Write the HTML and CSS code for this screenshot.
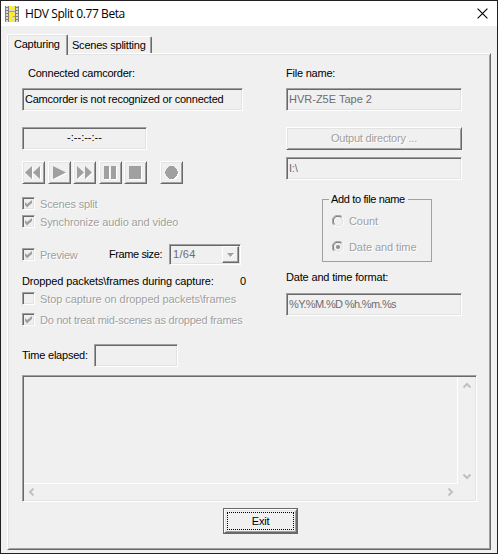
FILE: index.html
```html
<!DOCTYPE html>
<html lang="en">
<head>
<meta charset="utf-8">
<title>HDV Split 0.77 Beta</title>
<link rel="stylesheet" href="styles.css">
</head>
<body>
<div class="window">
  <header class="titlebar">
    <svg class="app-icon" width="16" height="16" viewBox="0 0 16 16" shape-rendering="crispEdges">
      <path fill="#d8d8d8" d="M0 0h14v16H0z"/>
      <path fill="#808080" d="M0 0h1v16H0zM3 0h1v16H3zM10 0h1v16h-1zM13 0h1v16h-1z"/>
      <path fill="#808080" d="M1 1h2v1H1zM1 4h2v1H1zM1 7h2v1H1zM1 10h2v1H1zM1 13h2v1H1zM11 1h2v1h-2zM11 4h2v1h-2zM11 7h2v1h-2zM11 10h2v1h-2zM11 13h2v1h-2z"/>
      <path fill="#a0a0a0" d="M4 5h6v1H4zM4 10h6v1H4z"/>
      <path fill="#ffee20" d="M4 0h2v1h2V0h2v4H8V3H6v1H4zM4 6h4v1h2v3H8v1H4zM4 12h2v2h2v-2h2v2H9v2H5v-2H4z"/>
      <path fill="#d0d0d0" d="M6 7h1v2H6z"/>
    </svg>
    <h1 class="title">HDV Split 0.77 Beta</h1>
    <svg class="close" width="11" height="11" viewBox="0 0 11 11"><path d="M.6.6l9.8 9.8M10.4.6L.6 10.4" stroke="#000" stroke-width="1.1"/></svg>
  </header>
  <nav class="tabs">
    <div class="tab active">Capturing</div>
    <div class="tab second">Scenes splitting</div>
  </nav>
  <main class="panel">
    <div class="columns">
      <section class="left">
        <div class="label camcorder-label">Connected camcorder:</div>
        <div class="field camcorder">Camcorder is not recognized or connected</div>
        <div class="field timecode">-:--:--:--</div>
        <div class="transport">
          <button class="btn"><svg class="glyph" width="17" height="17" viewBox="0 0 17 17"><path d="M7 2v13L0 8.500zM15 2v13L8 8.500z"/></svg></button>
          <button class="btn"><svg class="glyph" width="17" height="17" viewBox="0 0 17 17"><path d="M2 2l13 6.500L2 15z"/></svg></button>
          <button class="btn"><svg class="glyph" width="17" height="17" viewBox="0 0 17 17"><path d="M1 2l7 6.500L1 15zM9 2l7 6.500L9 15z"/></svg></button>
          <button class="btn"><svg class="glyph" width="17" height="17" viewBox="0 0 17 17"><path d="M2 2h5v13H2zM9 2h5v13H9z"/></svg></button>
          <button class="btn"><svg class="glyph" width="17" height="17" viewBox="0 0 17 17"><path d="M2 2h12v13H2z"/></svg></button>
          <button class="btn record"><svg class="glyph" width="17" height="17" viewBox="0 0 17 17"><path d="M6 2h5v1h1v1h1v1h1v2h1v3h-1v2h-1v1h-1v1h-1v1H6v-1H5v-1H4v-1H3v-2H2V7h1V5h1V4h1V3h1z"/></svg></button>
        </div>
        <div class="check scenes"><span class="box"><svg width="9" height="9" viewBox="0 0 9 9"><path d="M1 3l2 2 5-4v3L3 8.500 1 6z"/></svg></span><span class="off">Scenes split</span></div>
        <div class="check sync"><span class="box"><svg width="9" height="9" viewBox="0 0 9 9"><path d="M1 3l2 2 5-4v3L3 8.500 1 6z"/></svg></span><span class="off">Synchronize audio and video</span></div>
        <div class="preview-row">
          <div class="check preview"><span class="box"><svg width="9" height="9" viewBox="0 0 9 9"><path d="M1 3l2 2 5-4v3L3 8.500 1 6z"/></svg></span><span class="off">Preview</span></div>
          <span class="label frame-label">Frame size:</span>
          <div class="field select"><span>1/64</span><span class="drop"><svg width="9" height="6" viewBox="0 0 9 6"><path d="M2 2h7L5.500 6z" fill="#fff"/><path d="M1 1h7L4.500 5z" fill="#a0a0a0"/></svg></span></div>
        </div>
        <div class="dropped label"><span>Dropped packets\frames during capture:</span><span class="count">0</span></div>
        <div class="check stop"><span class="box"></span><span class="off">Stop capture on dropped packets\frames</span></div>
        <div class="check mid"><span class="box"><svg width="9" height="9" viewBox="0 0 9 9"><path d="M1 3l2 2 5-4v3L3 8.500 1 6z"/></svg></span><span class="off">Do not treat mid-scenes as dropped frames</span></div>
        <div class="elapsed"><span class="label">Time elapsed:</span><div class="field"></div></div>
      </section>
      <section class="right">
        <div class="label file-label">File name:</div>
        <div class="field disabled file">HVR-Z5E Tape 2</div>
        <button class="btn output"><span class="off">Output directory ...</span></button>
        <div class="field disabled dir">I:\</div>
        <fieldset class="group">
          <legend>Add to file name</legend>
          <div class="radio count-option"><svg width="12" height="12" viewBox="0 0 12 12"><use href="#ring"/></svg><span class="off">Count</span></div>
          <div class="radio date-option"><svg width="12" height="12" viewBox="0 0 12 12"><g id="ring" fill="none"><path d="M1.800 10.200A5.500 5.500 0 0 1 10.200 1.800" stroke="#a0a0a0"/><path d="M2.600 9.400A4.500 4.500 0 0 1 9.400 2.600" stroke="#696969"/><path d="M10.200 1.800A5.500 5.500 0 0 1 1.800 10.200" stroke="#fff"/><path d="M9.400 2.600A4.500 4.500 0 0 1 2.600 9.400" stroke="#e3e3e3"/></g><circle cx="6" cy="6" r="2.100" fill="#909090"/></svg><span class="off">Date and time</span></div>
        </fieldset>
        <div class="label format-label">Date and time format:</div>
        <div class="field disabled format">%Y.%M.%D %h.%m.%s</div>
      </section>
    </div>
    <div class="log">
      <div class="log-text"></div>
      <div class="vbar"><svg width="8" height="7" viewBox="0 0 8 7"><path d="M.5 5.500L4 2l3.500 3.500"/></svg><svg width="8" height="7" viewBox="0 0 8 7"><path d="M.5 1.500L4 5l3.500-3.500"/></svg></div>
      <div class="hbar"><svg width="7" height="8" viewBox="0 0 7 8"><path d="M5.500.5L2 4l3.500 3.500"/></svg><svg width="7" height="8" viewBox="0 0 7 8"><path d="M1.500.5L5 4 1.500 7.500"/></svg></div>
    </div>
    <button class="exit"><span class="exit-face"><span class="focus">Exit</span></span></button>
  </main>
</div>
</body>
</html>
```
FILE: styles.css
```css
* { box-sizing: border-box; }
body {
  margin: 0;
  font: 11px/13px "Liberation Sans", Arial, sans-serif;
  letter-spacing: -0.22px;
  color: #000;
}
button { font: inherit; letter-spacing: inherit; color: inherit; padding: 0; margin: 0; }
svg { display: block; flex: none; }
.window {
  width: 498px;
  height: 554px;
  border: 1px solid #232023;
  background: #f0f0f0;
  white-space: nowrap;
}
.titlebar { display: flex; align-items: center; height: 25px; background: #fff; padding: 0 9px 0 4px; }
.title { margin: 0 0 0 4px; font: 12px/16px "Open Sans", sans-serif; letter-spacing: -0.4px; }
.close { margin-left: auto; }

.tabs { display: flex; align-items: flex-end; height: 27px; padding-left: 6px; }
.tab {
  height: 17px;
  width: 84px;
  border: solid;
  border-width: 1px 2px 0 1px;
  border-color: #fff #696969 #fff #fff;
  border-radius: 2px 2px 0 0;
  box-shadow: inset -1px 0 #a0a0a0;
  padding: 2px 0 0 2px;
}
.tab.second { border-left: 0; padding-left: 4px; border-right-width: 1px; }
.tab.active {
  position: relative;
  height: 21px;
  width: 61px;
  margin-bottom: -2px;
  padding: 3px 0 0 6px;
  border-right-width: 1px;
  background: #f0f0f0;
  box-shadow: inset -1px 0 #a0a0a0, inset 1px 1px #e3e3e3;
}
.panel {
  width: 484px;
  height: 497px;
  margin-left: 6px;
  border: 1px solid;
  border-color: #fff #696969 #696969 #fff;
  box-shadow: inset 1px 1px #e3e3e3, inset -1px -1px #a0a0a0;
  padding-left: 14px;
}
.columns { display: flex; height: 321px; }
.left { width: 264px; }
.right { width: 177px; }

.field {
  height: 23px;
  border: 1px solid;
  border-color: #a0a0a0 #fff #fff #a0a0a0;
  box-shadow: inset 1px 1px #696969, inset -1px -1px #e3e3e3;
  padding: 4px 0 0 2px;
}
.disabled { color: #6d6d6d; width: 176px; }
.off { color: #a0a0a0; text-shadow: 1px 1px #fff; }
.btn {
  display: flex;
  align-items: center;
  justify-content: center;
  width: 23px;
  height: 23px;
  background: #f0f0f0;
  border: 1px solid;
  border-color: #fff #696969 #696969 #fff;
  box-shadow: inset 1px 1px #e3e3e3, inset -1px -1px #a0a0a0;
}

.camcorder-label, .file-label { margin-top: 13px; }
.camcorder-label { margin-left: 6px; }
.camcorder { margin-top: 8px; width: 221px; }
.timecode { margin-top: 16px; width: 125px; text-align: center; letter-spacing: 0; padding: 3px 0 0; }
.transport { display: flex; width: 161px; gap: 2.600px; margin-top: 11px; }
.record { margin-left: auto; }
.glyph { fill: #a0a0a0; filter: drop-shadow(1px 1px 0 #fff); }

.check { display: flex; align-items: center; gap: 5px; height: 13px; }
.box {
  width: 13px;
  height: 13px;
  border: 1px solid;
  border-color: #a0a0a0 #fff #fff #a0a0a0;
  box-shadow: inset 1px 1px #696969, inset -1px -1px #e3e3e3;
  padding: 1px;
  fill: #a0a0a0;
}
.scenes { margin-top: 13px; letter-spacing: -0.15px; }
.sync { margin-top: 5px; letter-spacing: -0.11px; }
.check .off { padding-top: 1px; }
.preview-row { display: flex; align-items: center; height: 21px; margin-top: 16px; }
.preview { width: 87px; }
.frame-label { width: 60px; letter-spacing: -0.4px; }
.select { display: flex; justify-content: space-between; width: 72px; height: 21px; padding: 1px; color: #6d6d6d; }
.select > span:first-child { padding: 2px 0 0 2px; letter-spacing: 0.300px; }
.drop {
  display: flex;
  align-items: center;
  justify-content: center;
  width: 17px;
  height: 17px;
  border: 1px solid;
  border-color: #fff #696969 #696969 #fff;
  box-shadow: inset -1px -1px #a0a0a0;
}
.dropped { display: flex; justify-content: space-between; width: 224px; margin-top: 10px; letter-spacing: -0.12px; }
.stop { margin-top: 4px; letter-spacing: -0.07px; }
.mid { margin-top: 8px; }
.elapsed { display: flex; align-items: center; margin-top: 18px; }
.elapsed .label { width: 72px; }
.elapsed .field { width: 84px; }

.file { margin-top: 8px; letter-spacing: 0; }
.output { width: 176px; margin-top: 16px; }
.dir { margin-top: 7px; }
.group {
  width: 110px;
  height: 69px;
  margin: 13px 0 0 36px;
  padding: 0 0 0 9px;
  border: 1px solid #a0a0a0;
  min-width: 0;
}
.group legend { padding: 0 3px 0 2px; margin-left: -3px; letter-spacing: -0.350px; }
.radio { display: flex; align-items: center; gap: 5px; height: 13px; letter-spacing: -0.08px; }
.radio .off { padding-top: 1px; }
.count-option { margin-top: 8px; }
.date-option { margin-top: 13px; }
.format-label { margin-top: 9px; letter-spacing: -0.17px; }
.format { margin-top: 9px; letter-spacing: -0.64px; }

.log {
  display: grid;
  grid-template: 1fr 16px / 1fr 17px;
  width: 455px;
  height: 127px;
  border: 1px solid;
  border-color: #a0a0a0 #fff #fff #a0a0a0;
  box-shadow: inset 1px 1px #696969, inset -1px -1px #e3e3e3;
  padding: 1px;
}
.log-text { border: solid #fff; border-width: 0 1px 1px 0; }
.vbar { display: flex; flex-direction: column; align-items: center; justify-content: space-between; padding: 5px 0 4px; }
.hbar { display: flex; align-items: center; justify-content: space-between; padding: 0 4px; }
.log path { fill: none; stroke: #c0c0c0; stroke-width: 2; }
.exit { display: block; width: 75px; height: 26px; margin: 6px 0 0 201px; border: 1px solid #696969; background: #f0f0f0; }
.exit-face {
  display: block;
  height: 24px;
  border: 1px solid;
  border-color: #fff #696969 #696969 #fff;
  box-shadow: inset 1px 1px #e3e3e3, inset -1px -1px #a0a0a0;
  padding: 2px;
}
.focus { display: block; height: 18px; border: 1px dotted #000; line-height: 17px; text-align: center; }
```
